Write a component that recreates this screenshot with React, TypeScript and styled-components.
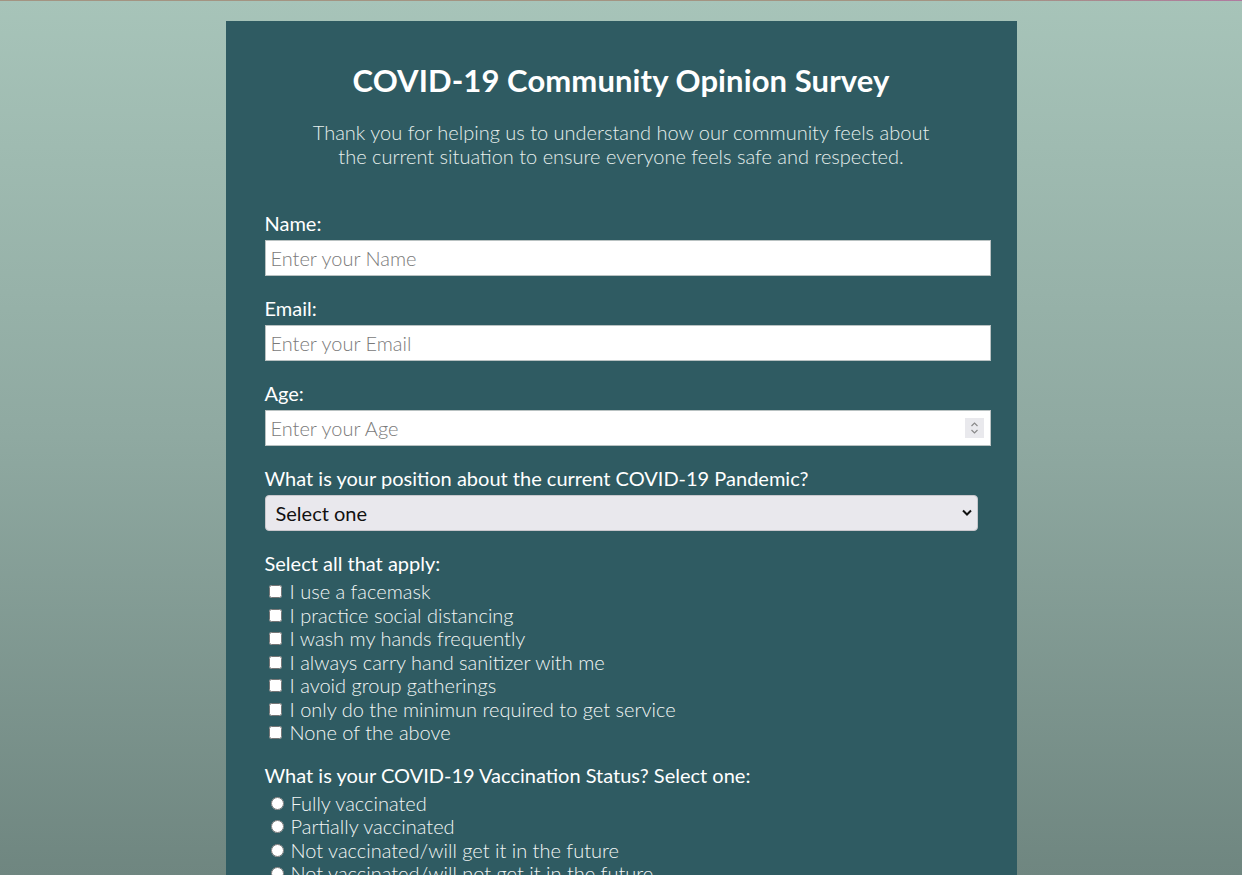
import React from "react";
import styled, { createGlobalStyle } from "styled-components";

const Global = createGlobalStyle`
  html, body { margin: 0; padding: 0; }
  body {
    font-family: "Lato", "Noto Sans", sans-serif;
    background: linear-gradient(180deg, #a7c4b9 0%, #8fa9a1 50%, #6f8680 100%) fixed;
    min-height: 100vh;
    color: #fff;
  }
  input[type=number]::-webkit-inner-spin-button,
  input[type=number]::-webkit-outer-spin-button { -webkit-appearance: none; margin: 0; }
`;

const TopLine = styled.div`
  height: 1px;
  background: linear-gradient(90deg, #a39482 0%, #a39482 80%, #b07aa0 100%);
`;

const Card = styled.main`
  width: 791px;
  box-sizing: border-box;
  margin: 20px auto 0;
  background: #2f5b62;
  padding: 40px 39px 60px;
`;

const Title = styled.h1`
  margin: 0;
  text-align: center;
  font-size: 31px;
  font-weight: 700;
  line-height: 38px;
  letter-spacing: 0.1px;
  color: #fff;
`;

const Description = styled.p`
  margin: 21px 0 0;
  text-align: center;
  font-size: 20px;
  font-weight: 300;
  line-height: 24px;
  color: #e6efed;
`;

const Form = styled.form`
  margin-top: 43px;
  display: flex;
  flex-direction: column;
`;

const Group = styled.div<{ $gap?: number }>`
  display: flex;
  flex-direction: column;
  margin-bottom: ${(p) => p.$gap ?? 20}px;
`;

const Label = styled.label`
  font-size: 20px;
  font-weight: 400;
  line-height: 24px;
  color: #fff;
  margin-bottom: 5px;
`;

const TextInput = styled.input`
  flex-shrink: 0;
  height: 36px;
  box-sizing: border-box;
  width: calc(100% + 13px);
  border: 1px solid #b9c2c2;
  background: #fff;
  padding: 0 5px;
  font-family: inherit;
  font-size: 20px;
  font-weight: 300;
  color: #333;
  &::placeholder { color: #7a7a7a; }
`;

const InputWrap = styled.div`
  position: relative;
  display: flex;
`;

const Spinner = styled.div`
  position: absolute;
  right: -6px;
  top: 8px;
  width: 19px;
  height: 20px;
  background: #e9e9ed;
  display: flex;
  align-items: center;
  justify-content: center;
  pointer-events: none;
`;

const Select = styled.select`
  appearance: none;
  width: 100%;
  height: 36px;
  border: 1px solid #c8c7cc;
  border-radius: 4px;
  background: #e9e8ed;
  padding: 0 10px;
  font-family: inherit;
  font-size: 20px;
  font-weight: 400;
  color: #111;
`;

const Chevron = styled.svg`
  position: absolute;
  right: 6px;
  top: 14px;
  pointer-events: none;
`;

const OptionList = styled.div`
  display: flex;
  flex-direction: column;
`;

const OptionRow = styled.label`
  display: flex;
  align-items: center;
  font-size: 20px;
  font-weight: 300;
  line-height: 23.5px;
  color: #f2f6f5;
`;

const Check = styled.input`
  width: 13px;
  height: 13px;
  margin: 0 8px 0 4px;
`;

const Radio = styled.input`
  width: 13px;
  height: 13px;
  margin: 0 7px 0 6px;
`;

const fields = [
  { id: "name", label: "Name:", placeholder: "Enter your Name", type: "text" },
  { id: "email", label: "Email:", placeholder: "Enter your Email", type: "email" },
];

const checks = [
  "I use a facemask",
  "I practice social distancing",
  "I wash my hands frequently",
  "I always carry hand sanitizer with me",
  "I avoid group gatherings",
  "I only do the minimun required to get service",
  "None of the above",
];

const radios = [
  "Fully vaccinated",
  "Partially vaccinated",
  "Not vaccinated/will get it in the future",
  "Not vaccinated/will not get it in the future",
];

export default function App() {
  return (
    <>
      <Global />
      <TopLine />
      <Card>
        <Title>COVID-19 Community Opinion Survey</Title>
        <Description>
          Thank you for helping us to understand how our community feels about
          <br />
          the current situation to ensure everyone feels safe and respected.
        </Description>
        <Form>
          {fields.map((f) => (
            <Group key={f.id}>
              <Label htmlFor={f.id}>{f.label}</Label>
              <TextInput id={f.id} type={f.type} placeholder={f.placeholder} />
            </Group>
          ))}
          <Group>
            <Label htmlFor="age">Age:</Label>
            <InputWrap>
              <TextInput id="age" type="number" placeholder="Enter your Age" />
              <Spinner>
                <svg width="9" height="14" viewBox="0 0 9 14" fill="none" stroke="#8a8a8a" strokeWidth="1.2">
                  <path d="M1.5 5 L4.5 2 L7.5 5" />
                  <path d="M1.5 9 L4.5 12 L7.5 9" />
                </svg>
              </Spinner>
            </InputWrap>
          </Group>
          <Group>
            <Label htmlFor="position">What is your position about the current COVID-19 Pandemic?</Label>
            <InputWrap>
              <Select id="position" defaultValue="">
                <option value="" disabled>Select one</option>
                <option>Very concerned</option>
                <option>Somewhat concerned</option>
                <option>Not concerned</option>
              </Select>
              <Chevron width="10" height="7" viewBox="0 0 10 7" fill="none" stroke="#111" strokeWidth="2">
                <path d="M1 1.5 L5 5.5 L9 1.5" />
              </Chevron>
            </InputWrap>
          </Group>
          <Group $gap={18}>
            <Label as="div">Select all that apply:</Label>
            <OptionList>
              {checks.map((c) => (
                <OptionRow key={c}>
                  <Check type="checkbox" />
                  {c}
                </OptionRow>
              ))}
            </OptionList>
          </Group>
          <Group $gap={18}>
            <Label as="div">What is your COVID-19 Vaccination Status? Select one:</Label>
            <OptionList>
              {radios.map((r) => (
                <OptionRow key={r}>
                  <Radio type="radio" name="vaccine" />
                  {r}
                </OptionRow>
              ))}
            </OptionList>
          </Group>
        </Form>
      </Card>
    </>
  );
}
